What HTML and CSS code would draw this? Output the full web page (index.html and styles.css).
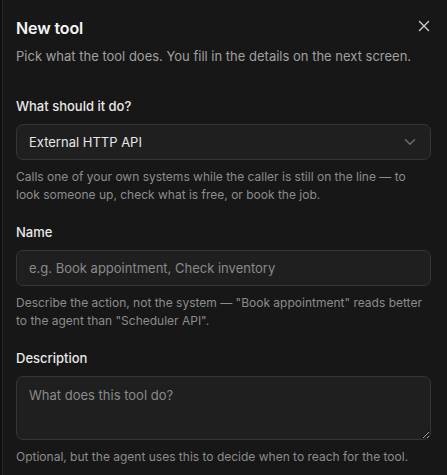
FILE: index.html
```html
<!DOCTYPE html>
<html lang="en">
<head>
<meta charset="utf-8">
<title>New tool</title>
<link rel="stylesheet" href="styles.css">
</head>
<body>
<div class="dialog">
  <div class="header">
    <h2 class="title">New tool</h2>
    <p class="subtitle">Pick what the tool does. You fill in the details on the next screen.</p>
    <button class="close" aria-label="Close">
      <svg width="12" height="12" viewBox="0 0 12 12" fill="none" stroke="currentColor" stroke-width="1.4" stroke-linecap="round"><path d="M1.5 1.5l9 9M10.5 1.5l-9 9"/></svg>
    </button>
  </div>
  <div class="field">
    <label class="label">What should it do?</label>
    <div class="select">
      <span>External HTTP API</span>
      <svg class="chev" width="12" height="8" viewBox="0 0 12 8" fill="none" stroke="currentColor" stroke-width="1.4" stroke-linecap="round" stroke-linejoin="round"><path d="M1.5 1.75l4.5 4.5 4.5-4.5"/></svg>
    </div>
    <p class="help">Calls one of your own systems while the caller is still on the line — to look someone up, check what is free, or book the job.</p>
  </div>
  <div class="field">
    <label class="label">Name</label>
    <input class="input" type="text" placeholder="e.g. Book appointment, Check inventory">
    <p class="help">Describe the action, not the system — "Book appointment" reads better to the agent than "Scheduler API".</p>
  </div>
  <div class="field">
    <label class="label">Description</label>
    <textarea class="textarea" placeholder="What does this tool do?"></textarea>
    <p class="help">Optional, but the agent uses this to decide when to reach for the tool.</p>
  </div>
</div>
</body>
</html>
```
FILE: styles.css
```css
* { box-sizing: border-box; }
html, body { margin: 0; padding: 0; }
body {
  background: #0f0f0f;
  font-family: Inter, "Noto Sans", sans-serif;
  height: 475px;
  overflow: hidden;
}
.dialog {
  margin-left: 2px;
  border-left: 1px solid #242424;
  background: #171717;
  min-height: 475px;
  padding: 16px 16px 16px 13px;
  display: flex;
  flex-direction: column;
  gap: 18px;
}
.header {
  position: relative;
  margin-bottom: 12px;
}
.title {
  margin: 0;
  font-size: 16px;
  line-height: 24px;
  font-weight: 600;
  color: #f4f4f4;
  letter-spacing: -0.1px;
}
.subtitle {
  margin: 6px 0 0;
  font-size: 13px;
  line-height: 20px;
  color: #a0a0a0;
}
.close {
  position: absolute;
  top: 2px;
  right: -1px;
  width: 16px;
  height: 16px;
  padding: 0;
  border: 0;
  background: none;
  color: #cfcfcf;
  display: flex;
  align-items: center;
  justify-content: center;
}
.field {
  display: flex;
  flex-direction: column;
}
.label {
  font-size: 13px;
  line-height: 20px;
  font-weight: 500;
  color: #e8e8e8;
  margin-bottom: 8px;
}
.select, .input, .textarea {
  width: 100%;
  border: 1px solid #353535;
  background: #1f1f1f;
  border-radius: 7px;
  font-family: inherit;
  font-size: 13px;
  color: #e6e6e6;
}
.select {
  height: 36px;
  display: flex;
  align-items: center;
  justify-content: space-between;
  padding: 0 14px 0 12px;
}
.chev { color: #707070; }
.input {
  height: 36px;
  padding: 0 12px;
  outline: none;
}
.textarea {
  height: 64px;
  padding: 8px 12px;
  line-height: 20px;
  resize: vertical;
  outline: none;
  display: block;
}
.input::placeholder, .textarea::placeholder { color: #8a8a8a; }
.help {
  margin: 8px 0 0;
  font-size: 12px;
  line-height: 18px;
  color: #8c8c8c;
}
```
